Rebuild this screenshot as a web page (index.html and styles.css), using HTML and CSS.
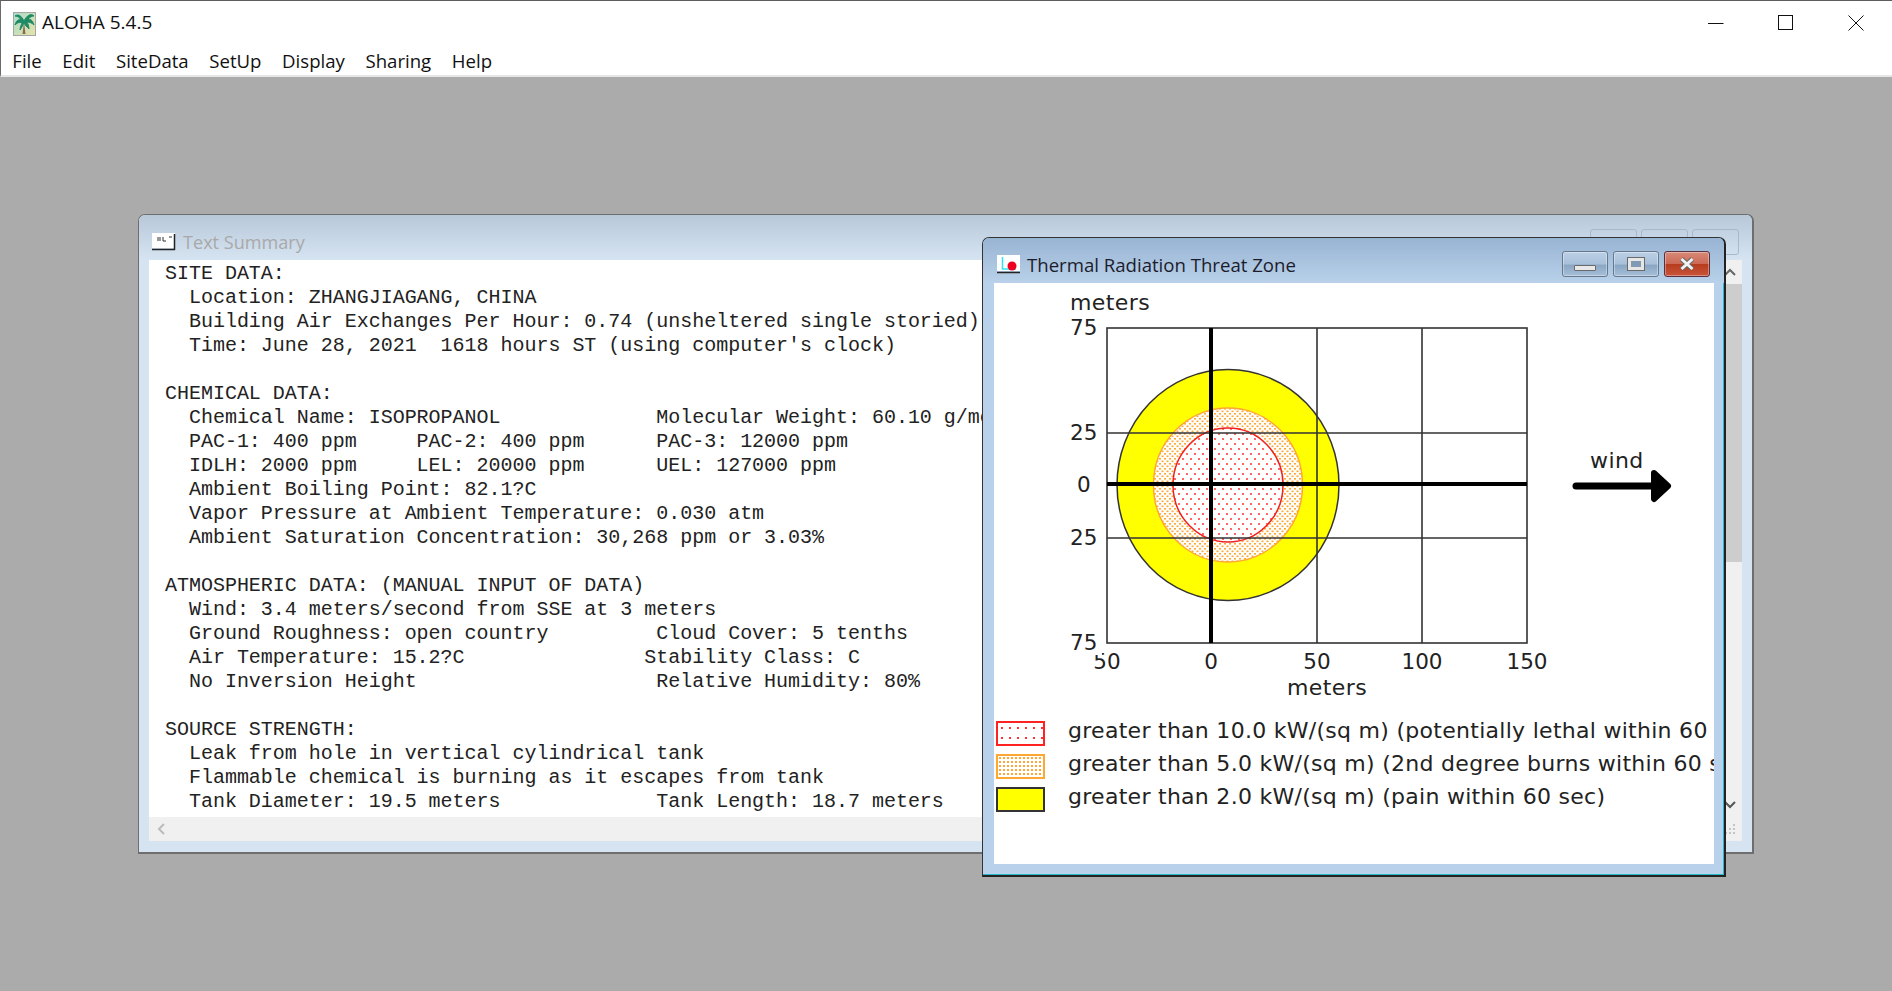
FILE: index.html
```html
<!DOCTYPE html>
<html lang="en">
<head>
    <meta charset="UTF-8">
    <title>ALOHA 5.4.5</title>
    <link rel="stylesheet" href="styles.css">
</head>
<body>
    <header class="app-bar">
        <div class="app-title">
            <svg class="palm" width="23" height="24" viewBox="0 0 23 24">
                <defs>
                    <linearGradient id="palm-bg" x1="0" y1="0" x2="1" y2="1">
                        <stop offset="0" stop-color="#a9dccb"/>
                        <stop offset="1" stop-color="#e6e3a8"/>
                    </linearGradient>
                </defs>
                <rect x="0.5" y="0.5" width="22" height="23" fill="url(#palm-bg)" stroke="#a5a5a5"/>
                <path d="M11 10 L12.5 22 L9.5 22 Z" fill="#8a6a50"/>
                <path d="M11 9 C8 3 5 2 2 4 C5 4 7 6 8 8 C5 7 3 9 2 13 C5 10 7 10 9 11 C8 13 7 16 7 18 C9 15 10 13 11 11 C12 13 14 15 16 17 C16 14 15 12 14 10 C17 10 19 11 21 13 C20 9 18 7 15 7 C17 5 19 4 21 4 C18 1 14 3 11 9 Z" fill="#1f8a66" stroke="#1f8a66"/>
            </svg>
            <span>ALOHA 5.4.5</span>
            <div class="app-controls">
                <button class="app-btn"><svg width="16" height="16" viewBox="0 0 16 16"><path d="M0 8.5H15.5" stroke="#111" fill="none"/></svg></button>
                <button class="app-btn"><svg width="16" height="16" viewBox="0 0 16 16"><rect x="0.5" y="0.5" width="14" height="14" stroke="#111" fill="none"/></svg></button>
                <button class="app-btn"><svg width="16" height="16" viewBox="0 0 16 16"><path d="M0.5 0.5L15.5 15.5M15.5 0.5L0.5 15.5" stroke="#111" fill="none"/></svg></button>
            </div>
        </div>
        <nav class="menu">
            <span>File</span>
            <span>Edit</span>
            <span>SiteData</span>
            <span>SetUp</span>
            <span>Display</span>
            <span>Sharing</span>
            <span>Help</span>
        </nav>
    </header>

    <main class="desktop">
        <section class="window summary">
            <div class="titlebar">
                <svg class="title-icon" width="24" height="18" viewBox="0 0 24 18">
                    <rect width="23" height="15" fill="#fff"/>
                    <path d="M6 4V8M8 4V8M11 4V8H14M17 4H20" stroke="#333" fill="none"/>
                    <path d="M0 16.5H23M22.5 1V17" stroke="#222" stroke-width="1.5" fill="none"/>
                </svg>
                <span class="title-text">Text Summary</span>
                <div class="ghost-controls">
                    <span></span>
                    <span></span>
                    <span></span>
                </div>
            </div>
            <div class="summary-client">
                <pre class="report">SITE DATA:
  Location: ZHANGJIAGANG, CHINA
  Building Air Exchanges Per Hour: 0.74 (unsheltered single storied)
  Time: June 28, 2021  1618 hours ST (using computer's clock)

CHEMICAL DATA:
  Chemical Name: ISOPROPANOL             Molecular Weight: 60.10 g/mol
  PAC-1: 400 ppm     PAC-2: 400 ppm      PAC-3: 12000 ppm
  IDLH: 2000 ppm     LEL: 20000 ppm      UEL: 127000 ppm
  Ambient Boiling Point: 82.1?C
  Vapor Pressure at Ambient Temperature: 0.030 atm
  Ambient Saturation Concentration: 30,268 ppm or 3.03%

ATMOSPHERIC DATA: (MANUAL INPUT OF DATA)
  Wind: 3.4 meters/second from SSE at 3 meters
  Ground Roughness: open country         Cloud Cover: 5 tenths
  Air Temperature: 15.2?C               Stability Class: C
  No Inversion Height                    Relative Humidity: 80%

SOURCE STRENGTH:
  Leak from hole in vertical cylindrical tank
  Flammable chemical is burning as it escapes from tank
  Tank Diameter: 19.5 meters             Tank Length: 18.7 meters</pre>
                <div class="vscroll">
                    <div class="scroll-btn">
                        <svg width="12" height="8" viewBox="0 0 12 8"><path d="M1 7L6 2L11 7" stroke="#666" stroke-width="2" fill="none"/></svg>
                    </div>
                    <div class="thumb"></div>
                    <div class="vscroll-rest"></div>
                    <div class="scroll-btn">
                        <svg width="12" height="8" viewBox="0 0 12 8"><path d="M1 1L6 6L11 1" stroke="#555" stroke-width="2" fill="none"/></svg>
                    </div>
                </div>
                <div class="hscroll">
                    <div class="scroll-btn">
                        <svg width="8" height="12" viewBox="0 0 8 12"><path d="M7 1L2 6L7 11" stroke="#bbb" stroke-width="2" fill="none"/></svg>
                    </div>
                </div>
                <div class="grip">
                    <svg width="12" height="12" viewBox="0 0 12 12">
                        <path d="M9 1h2v2H9zM5 5h2v2H5zM9 5h2v2H9zM1 9h2v2H1zM5 9h2v2H5zM9 9h2v2H9z" fill="#c4c4c4"/>
                    </svg>
                </div>
            </div>
        </section>

        <section class="window thermal">
            <div class="titlebar">
                <svg class="title-icon" width="24" height="19" viewBox="0 0 24 19">
                    <rect width="23" height="16" fill="#fff"/>
                    <path d="M5.5 2V14H19" stroke="#2de5f0" stroke-width="1.5" fill="none"/>
                    <circle cx="15" cy="11" r="4.5" fill="#f00020"/>
                    <path d="M0 17.5H23" stroke="#222" stroke-width="1.5"/>
                </svg>
                <span class="title-text">Thermal Radiation Threat Zone</span>
                <div class="caption-btns">
                    <button class="cap-btn"><span class="cap-min"></span></button>
                    <button class="cap-btn"><span class="cap-max"></span></button>
                    <button class="cap-btn cap-close">
                        <svg width="18" height="14" viewBox="0 0 18 14"><path d="M3.5 2L14.5 12M14.5 2L3.5 12" stroke="#666" stroke-width="5"/><path d="M3.5 2L14.5 12M14.5 2L3.5 12" stroke="#f2f2f2" stroke-width="3"/></svg>
                    </button>
                </div>
            </div>
            <div class="thermal-client">
                <svg class="plot" width="720" height="425" viewBox="0 0 720 425">
                    <defs>
                        <pattern id="dots-orange" width="5" height="5" patternUnits="userSpaceOnUse">
                            <rect width="5" height="5" fill="#fff"/>
                            <rect x="0" y="0" width="2" height="1.6" fill="#ffa733"/>
                            <rect x="2.5" y="2.5" width="2" height="1.6" fill="#ffa733"/>
                        </pattern>
                        <pattern id="dots-red" width="8" height="10" patternUnits="userSpaceOnUse">
                            <rect width="8" height="10" fill="#fff"/>
                            <circle cx="1" cy="1" r="1" fill="#f33"/>
                            <circle cx="5" cy="6" r="1" fill="#f33"/>
                        </pattern>
                    </defs>
                    <ellipse cx="234" cy="202" rx="111" ry="115.5" fill="#ff0" stroke="#333" stroke-width="1.5"/>
                    <ellipse cx="234" cy="202" rx="74.5" ry="77" fill="url(#dots-orange)" stroke="#ffa733" stroke-width="1.5"/>
                    <ellipse cx="234" cy="202" rx="55" ry="57" fill="url(#dots-red)" stroke="#f02020" stroke-width="1.5"/>
                    <rect x="113" y="45" width="420" height="315" fill="none" stroke="#333" stroke-width="1.6"/>
                    <path d="M323 45V360M428 45V360M113 150H533M113 255H533" stroke="#333" stroke-width="1.6" fill="none"/>
                    <path d="M217 45V360M113 201H533" stroke="#000" stroke-width="4" fill="none"/>

                    <g class="axis-text">
                        <text class="axis-word" x="76" y="27">meters</text>
                        <text x="113" y="386" text-anchor="middle">50</text>
                        <rect x="76" y="345" width="32" height="27" fill="#fff"/>
                        <text x="76" y="52">75</text>
                        <text x="76" y="157">25</text>
                        <text x="83" y="209">0</text>
                        <text x="76" y="262">25</text>
                        <text x="76" y="367">75</text>
                        <text x="217" y="386" text-anchor="middle">0</text>
                        <text x="323" y="386" text-anchor="middle">50</text>
                        <text x="428" y="386" text-anchor="middle">100</text>
                        <text x="533" y="386" text-anchor="middle">150</text>
                        <text class="axis-word" x="333" y="412" text-anchor="middle">meters</text>
                        <text class="axis-word" x="596" y="185">wind</text>
                    </g>
                    <path d="M582 203H660" stroke="#000" stroke-width="7" stroke-linecap="round"/>
                    <path d="M660 190L674 203L660 216Z" fill="#000" stroke="#000" stroke-width="6" stroke-linejoin="round"/>
                </svg>
                <ul class="legend">
                    <li><span class="swatch swatch-lethal"></span><span class="legend-text">greater than 10.0 kW/(sq m) (potentially lethal within 60 sec)</span></li>
                    <li><span class="swatch swatch-burns"></span><span class="legend-text">greater than 5.0 kW/(sq m) (2nd degree burns within 60 sec)</span></li>
                    <li><span class="swatch swatch-pain"></span><span class="legend-text">greater than 2.0 kW/(sq m) (pain within 60 sec)</span></li>
                </ul>
            </div>
        </section>
    </main>
</body>
</html>
```

FILE: styles.css
```css
html, body {
    margin: 0;
    padding: 0;
    height: 100%;
}

body {
    display: flex;
    flex-direction: column;
    background-color: #ababab;
    font-family: 'Open Sans', 'Noto Sans', sans-serif;
    color: #111;
    overflow: hidden;
}

.app-bar {
    background-color: #fff;
    border-top: 1px solid #5c5c5c;
    border-left: 1px solid #6a6a6a;
    border-bottom: 2px solid #e6e6e6;
    height: 74px;
    flex: none;
}

.app-title {
    display: flex;
    align-items: center;
    height: 39px;
    padding-left: 12px;
    font-size: 19px;
}

.palm {
    margin: 6px 6px 0 0;
}

.app-title > span {
    margin-top: 3px;
}

.app-controls {
    margin-left: auto;
    padding-right: 1px;
    display: flex;
}

.app-btn {
    width: 70px;
    height: 39px;
    padding: 5px 0 0;
    border: none;
    background: none;
    display: flex;
    justify-content: center;
    align-items: center;
}

.menu {
    display: flex;
    box-sizing: border-box;
    height: 35px;
    padding: 5px 0 0 1px;
    align-items: center;
    font-size: 18.6px;
}

.menu span {
    padding: 0 10.3px;
}

.desktop {
    flex: 1;
    position: relative;
}

/* child windows sit on the gray desktop */
.window {
    position: absolute;
    box-sizing: border-box;
    display: flex;
    flex-direction: column;
}

.titlebar {
    display: flex;
    box-sizing: border-box;
    align-items: center;
    flex: none;
}

.title-icon {
    flex: none;
}

.summary {
    left: 138px;
    top: 137px;
    width: 1616px;
    height: 640px;
    padding: 0 10px 11px;
    background-color: #d6e4f2;
    border: 1px solid #6e6e6e;
    border-bottom-width: 2px;
    border-right-width: 2px;
    border-radius: 7px 7px 0 0;
}

.summary .titlebar {
    height: 45px;
    background: linear-gradient(to bottom, #b8c8d9, #d6e4f2);
    margin: 0 -10px;
    padding: 8px 13px 0 13px;
    border-radius: 6px 6px 0 0;
}

.summary .title-text {
    margin-left: 7px;
    font-size: 18.1px;
    color: #a9a9a9;
}

.ghost-controls {
    margin-left: auto;
    align-self: flex-start;
    margin-top: 6px;
    display: flex;
    gap: 4px;
}

.ghost-controls span {
    box-sizing: border-box;
    width: 47px;
    height: 26px;
    border: 1px solid #a9b9c9;
    border-radius: 3px;
}

.summary-client {
    flex: 1;
    display: grid;
    grid-template-columns: 1fr 24px;
    grid-template-rows: 1fr 24px;
    min-height: 0;
    background-color: #fff;
}

.report {
    margin: 0;
    padding: 2px 0 0 16px;
    overflow: hidden;
    font-family: 'Liberation Mono', monospace;
    font-size: 20px;
    line-height: 24px;
    letter-spacing: -0.02px;
    color: #222;
}

.vscroll {
    display: flex;
    flex-direction: column;
    background-color: #f0f0f0;
}

.scroll-btn {
    flex: none;
    width: 24px;
    height: 24px;
    display: flex;
    justify-content: center;
    align-items: center;
}

.thumb {
    height: 278px;
    background-color: #cdcdcd;
    flex: none;
}

.vscroll-rest {
    flex: 1;
}

.hscroll {
    background-color: #f0f0f0;
}

.grip {
    background-color: #f0f0f0;
    display: flex;
    justify-content: center;
    align-items: center;
}

.thermal {
    left: 982px;
    top: 160px;
    width: 744px;
    height: 640px;
    padding: 0 10px 11px 11px;
    background-color: #b9d1ea;
    border: 1px solid #333;
    border-bottom: 2px solid #222;
    border-right: 2px solid #222;
    border-radius: 7px 7px 0 0;
    box-shadow: inset -1px -1px 0 #29b8c8;
}

.thermal .titlebar {
    height: 45px;
    background: linear-gradient(to bottom, #98b4d3, #b9d1ea);
    margin: 0 -10px 0 -11px;
    padding: 7px 14px 0 14px;
    border-radius: 6px 6px 0 0;
}

.thermal .title-text {
    margin-left: 6px;
    font-size: 18.6px;
    color: #1c1c2c;
}

.caption-btns {
    margin-left: auto;
    display: flex;
    gap: 5px;
}

.cap-btn {
    width: 46px;
    height: 26px;
    padding: 0;
    display: flex;
    justify-content: center;
    align-items: center;
    border: 1px solid #66788c;
    border-radius: 3px;
    background: linear-gradient(to bottom, #bcd0e6 0%, #a8c0da 50%, #8aa6c2 55%, #a6bfd9 100%);
    box-shadow: inset 0 0 0 1px rgba(255, 255, 255, 0.35);
}

.cap-min {
    width: 22px;
    height: 6px;
    margin-top: 7px;
    background-color: #e8e8e8;
    border: 1px solid #6a6a6a;
    border-radius: 1px;
    box-sizing: border-box;
}

.cap-max {
    width: 16px;
    height: 12px;
    border: 3px solid #e6e6e6;
    outline: 1px solid #6a6a6a;
    box-sizing: border-box;
    background-color: #8099b5;
}

.cap-close {
    border-color: #5a3040;
    background: linear-gradient(to bottom, #d88a78 0%, #cc6a56 48%, #b83c1e 52%, #c8553a 100%);
}

.thermal-client {
    flex: 1;
    min-height: 0;
    overflow: hidden;
    background-color: #fff;
}

.plot {
    display: block;
}

.axis-text text {
    font-family: 'DejaVu Sans', sans-serif;
    font-size: 21.5px;
    fill: #222;
}

.axis-text .axis-word {
    font-size: 22px;
    letter-spacing: 0.4px;
}

.legend {
    list-style: none;
    margin: 0;
    padding: 9px 0 0 2px;
    font-family: 'DejaVu Sans', sans-serif;
    font-size: 22px;
    letter-spacing: 0.28px;
    color: #222;
}

.legend li {
    display: flex;
    align-items: center;
    height: 33px;
    white-space: nowrap;
}

.legend-text {
    margin-bottom: 6px;
}

.swatch {
    flex: none;
    width: 49px;
    height: 25px;
    margin-right: 23px;
    box-sizing: border-box;
}

.swatch-lethal {
    border: 2px solid #f22;
    background-color: #fff;
    background-image: radial-gradient(circle, #f33 1px, transparent 1.2px);
    background-size: 8px 10px;
}

.swatch-burns {
    border: 2px solid #ffa733;
    background-color: #fff;
    background-image: radial-gradient(circle, #ffa733 1.2px, transparent 1.4px);
    background-size: 4px 4px;
}

.swatch-pain {
    border: 2px solid #333;
    background-color: #ff0;
}
```
